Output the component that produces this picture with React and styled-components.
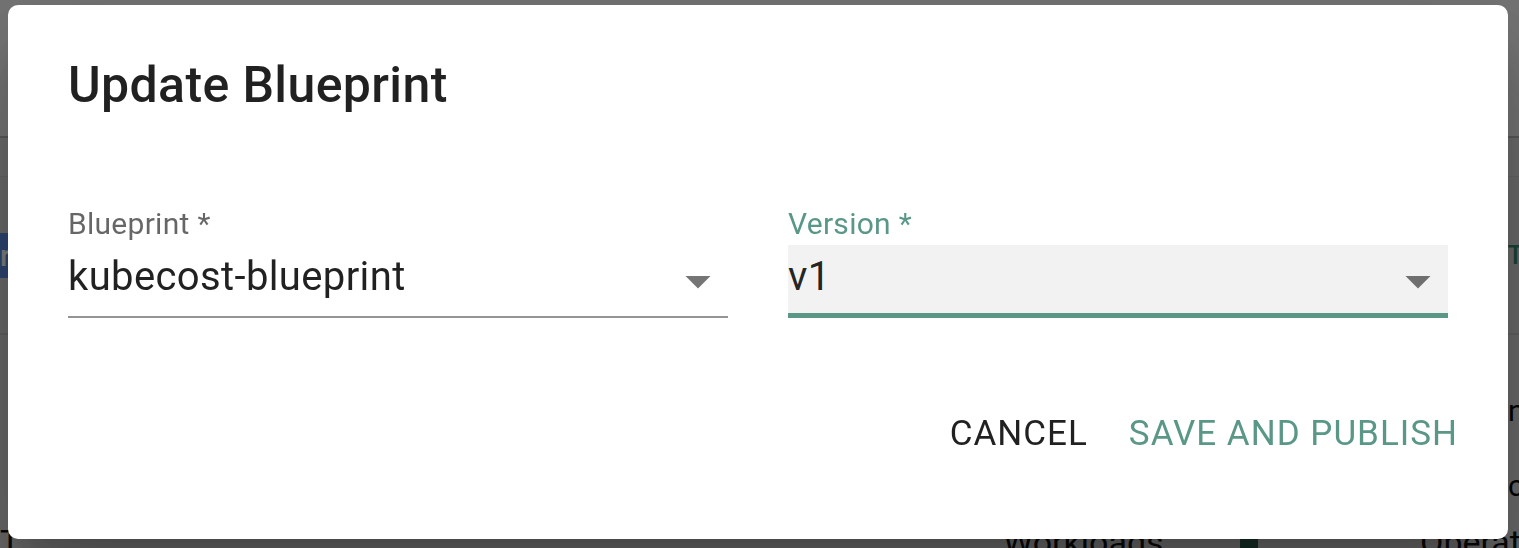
import React from "react";
import styled, { createGlobalStyle } from "styled-components";

const GlobalStyle = createGlobalStyle`
  html, body { margin: 0; padding: 0; height: 100%; overflow: hidden; }
  body { font-family: Roboto, "Noto Sans", Arial, sans-serif; }
  #root { height: 100%; }
  * { box-sizing: border-box; }
`;

const GREEN = "#5a9787";

/* ---------- page underneath the dialog ---------- */
const Page = styled.div`
  height: 548px;
  width: 1519px;
  overflow: hidden;
  background: #d4d4d4;
  display: flex;
  flex-direction: column;
`;

const Header = styled.header`
  height: 138px;
  flex: none;
  background: #ebebeb;
  border-bottom: 2px solid #b4b4b4;
`;

const Tabs = styled.div`
  height: 39px;
  flex: none;
  background: #d9d9d9;
  border-bottom: 1px solid #cacaca;
`;

const Toolbar = styled.div`
  height: 158px;
  flex: none;
  display: flex;
  align-items: center;
  justify-content: space-between;
  border-bottom: 2px solid #c4c4c4;
`;

const BlueButton = styled.button`
  margin-left: -80px;
  height: 45px;
  padding: 0 24px 0 10px;
  border: none;
  background: #5a8ae0;
  color: #fff;
  font: 500 30px Roboto, sans-serif;
  width: 400px;
  text-align: left;
  text-indent: 12px;
`;

const GreenLink = styled.span`
  margin-right: -36px;
  font: 500 26px Roboto, sans-serif;
  color: #2f8a6d;
  letter-spacing: 1px;
`;

const Body = styled.div`
  flex: 1;
  display: flex;
  flex-direction: column;
  justify-content: space-between;
  padding: 58px 0 0;
`;

const SideLines = styled.div`
  display: flex;
  flex-direction: column;
  gap: 40px;
  padding-left: 1508px;
  font: 30px Roboto, sans-serif;
  color: #000;
  white-space: nowrap;
`;

const BottomRow = styled.div`
  display: grid;
  grid-template-columns: 1003px 237px 180px 1fr;
  align-items: end;
  margin-bottom: -14px;
  font: 34px Roboto, sans-serif;
  color: #111;
  white-space: nowrap;
`;

const Bar = styled.span`
  display: block;
  width: 18px;
  height: 24px;
  background: #2c5b4b;
`;

/* ---------- modal ---------- */
const Backdrop = styled.div`
  position: fixed;
  inset: 0;
  background: rgba(0, 0, 0, 0.5);
  display: flex;
  align-items: flex-start;
  padding: 5px 11px 9px 8px;
`;

const Dialog = styled.div`
  width: 1500px;
  height: 534px;
  background: #fff;
  border-radius: 10px;
  box-shadow: 0 27px 37px -17px rgba(0, 0, 0, 0.2),
    0 60px 95px 7px rgba(0, 0, 0, 0.14), 0 22px 115px 20px rgba(0, 0, 0, 0.12);
  display: flex;
  flex-direction: column;
`;

const Title = styled.h2`
  margin: 0;
  padding: 40px 60px;
  font: 500 50px/80px Roboto, sans-serif;
  letter-spacing: 0.0075em;
  color: rgba(0, 0, 0, 0.87);
`;

const Content = styled.div`
  padding: 41px 60px 50px;
  display: grid;
  grid-template-columns: 1fr 1fr;
  gap: 60px;
`;

const Field = styled.div`
  display: flex;
  flex-direction: column;
`;

const Label = styled.label`
  font: 30px/36px Roboto, sans-serif;
  letter-spacing: 0.28px;
  color: ${(p) => (p.$focused ? GREEN : "rgba(0, 0, 0, 0.6)")};
  margin-bottom: 3px;
`;

const SelectBox = styled.div`
  position: relative;
  height: 73px;
  padding: 3px 60px 0 0;
  font: 40px/57px Roboto, sans-serif;
  letter-spacing: 0.375px;
  color: rgba(0, 0, 0, 0.87);
  background: ${(p) => (p.$focused ? "#f2f2f2" : "transparent")};
  border-bottom: ${(p) =>
    p.$focused ? `5px solid ${GREEN}` : "2.5px solid rgba(0, 0, 0, 0.42)"};
`;

const Arrow = styled.svg`
  position: absolute;
  right: 0;
  top: 6px;
  width: 60px;
  height: 60px;
  fill: rgba(0, 0, 0, 0.54);
`;

const Actions = styled.div`
  display: flex;
  justify-content: flex-end;
  gap: 21px;
  padding: 20px 40px 20px 20px;
`;

const TextButton = styled.button`
  border: none;
  background: transparent;
  padding: 15px 10px;
  font: 400 35px/61px Roboto, sans-serif;
  letter-spacing: 1px;
  text-transform: uppercase;
  color: ${(p) => (p.$primary ? GREEN : "rgba(0, 0, 0, 0.87)")};
  cursor: pointer;
`;

function Select({ label, value, focused }) {
  return (
    <Field>
      <Label $focused={focused}>{label} *</Label>
      <SelectBox $focused={focused}>
        {value}
        <Arrow viewBox="0 0 24 24" aria-hidden="true">
          <path d="M7 10l5 5 5-5z" />
        </Arrow>
      </SelectBox>
    </Field>
  );
}

export default function App() {
  return (
    <>
      <GlobalStyle />
      <Page>
        <Header />
        <Tabs />
        <Toolbar>
          <BlueButton>Filter</BlueButton>
          <GreenLink>TLE</GreenLink>
        </Toolbar>
        <Body>
          <SideLines>
            <span>na</span>
            <span>co</span>
          </SideLines>
          <BottomRow>
            <span>T</span>
            <span>Workloads</span>
            <Bar />
            <span>Operators</span>
          </BottomRow>
        </Body>
      </Page>
      <Backdrop>
        <Dialog role="dialog">
          <Title>Update Blueprint</Title>
          <Content>
            <Select label="Blueprint" value="kubecost-blueprint" />
            <Select label="Version" value="v1" focused />
          </Content>
          <Actions>
            <TextButton>Cancel</TextButton>
            <TextButton $primary>Save and Publish</TextButton>
          </Actions>
        </Dialog>
      </Backdrop>
    </>
  );
}
